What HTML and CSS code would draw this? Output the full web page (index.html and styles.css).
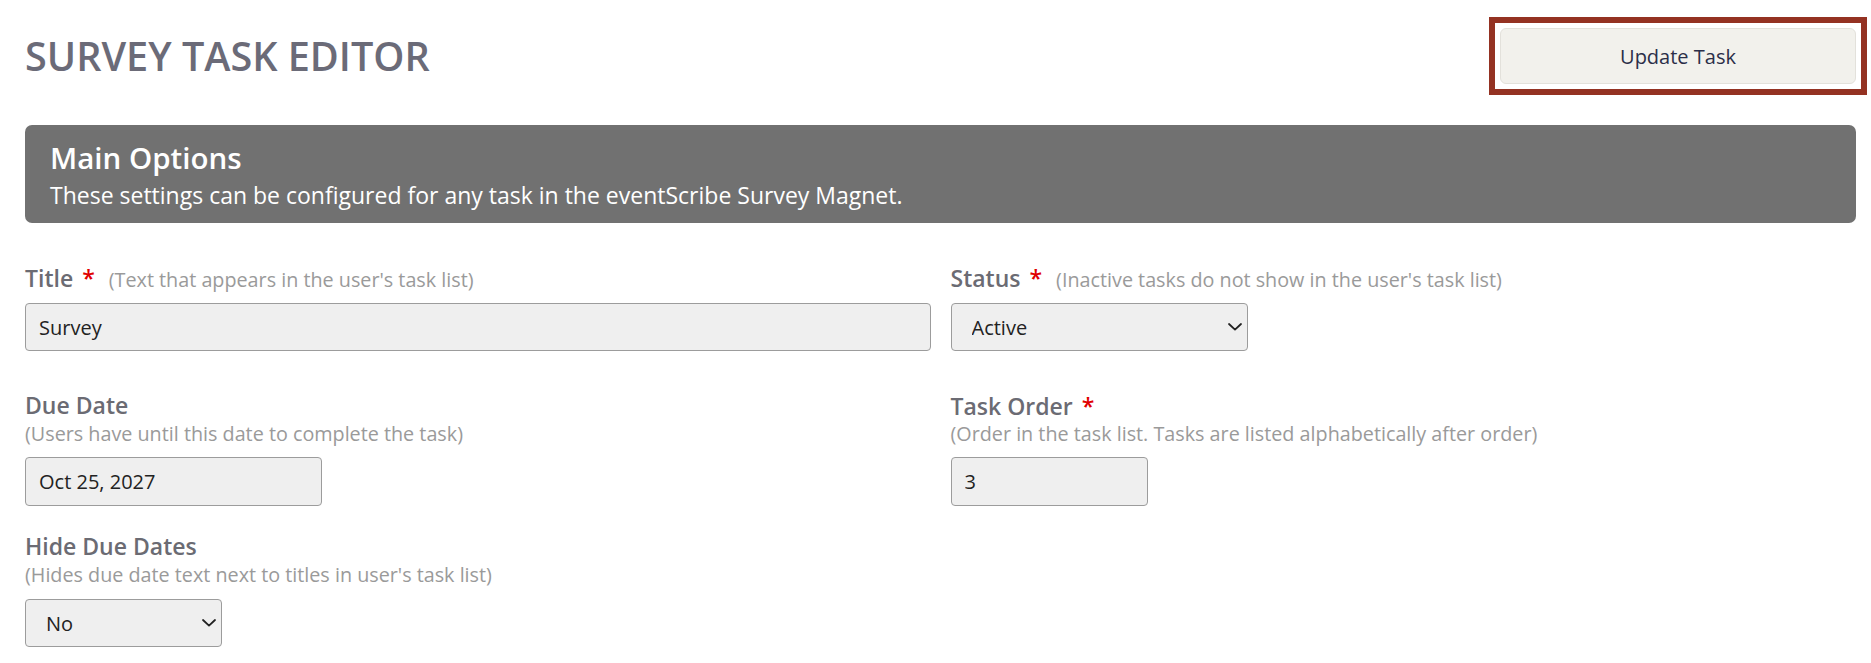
FILE: index.html
```html
<!DOCTYPE html>
<html lang="en">
<head>
<meta charset="utf-8">
<title>Survey Task Editor</title>
<link rel="stylesheet" href="styles.css">
</head>
<body>
<div class="page">
  <header class="page-header">
    <h1 class="page-title">SURVEY TASK EDITOR</h1>
    <div class="focus-ring">
      <button type="button" class="btn-update">Update Task</button>
    </div>
  </header>

  <section class="banner">
    <h2 class="banner-title">Main Options</h2>
    <p class="banner-text">These settings can be configured for any task in the eventScribe Survey Magnet.</p>
  </section>

  <div class="form-grid">
    <div class="field row-1">
      <div class="label-line">
        <label class="label" for="title">Title</label><span class="req">*</span><span class="hint inline">(Text that appears in the user's task list)</span>
      </div>
      <input id="title" class="input full" type="text" value="Survey">
    </div>
    <div class="field row-1">
      <div class="label-line">
        <label class="label" for="status">Status</label><span class="req">*</span><span class="hint inline">(Inactive tasks do not show in the user's task list)</span>
      </div>
      <div class="select-wrap w297">
        <select id="status" class="select"><option>Active</option><option>Inactive</option></select>
        <svg class="chevron" viewBox="0 0 14 8" aria-hidden="true"><path d="M1 1 L7 6.6 L13 1" fill="none" stroke="#222" stroke-width="1.8" stroke-linecap="round" stroke-linejoin="round"/></svg>
      </div>
    </div>

    <div class="field row-2">
      <div class="label-line"><label class="label" for="due">Due Date</label></div>
      <div class="hint">(Users have until this date to complete the task)</div>
      <input id="due" class="input w297" type="text" value="Oct 25, 2027">
    </div>
    <div class="field row-2">
      <div class="label-line"><label class="label" for="order">Task Order</label><span class="req">*</span></div>
      <div class="hint">(Order in the task list. Tasks are listed alphabetically after order)</div>
      <input id="order" class="input w197" type="text" value="3">
    </div>

    <div class="field row-3">
      <div class="label-line"><label class="label" for="hide">Hide Due Dates</label></div>
      <div class="hint">(Hides due date text next to titles in user's task list)</div>
      <div class="select-wrap w197">
        <select id="hide" class="select"><option>No</option><option>Yes</option></select>
        <svg class="chevron" viewBox="0 0 14 8" aria-hidden="true"><path d="M1 1 L7 6.6 L13 1" fill="none" stroke="#222" stroke-width="1.8" stroke-linecap="round" stroke-linejoin="round"/></svg>
      </div>
    </div>
  </div>
</div>
</body>
</html>
```

FILE: styles.css
```css
* { box-sizing: border-box; }

html, body {
  margin: 0;
  padding: 0;
  background: #ffffff;
}

body {
  font-family: "Open Sans", "Noto Sans", "Liberation Sans", sans-serif;
  color: #6b6b73;
}

.page {
  padding: 0 15px 0 25px;
}

.page-header {
  display: flex;
  justify-content: space-between;
  align-items: center;
  padding-top: 17px;
}

.page-title {
  margin: 0;
  font-size: 39.6px;
  font-weight: 600;
  line-height: 56px;
  color: #6b6b78;
  letter-spacing: 0;
}

.focus-ring {
  border: 6px solid #943222;
  padding: 5px;
  margin-right: -11px;
  display: flex;
}

.btn-update {
  width: 356px;
  height: 56px;
  background: #f2f1ec;
  border: 1px solid #e3e1db;
  border-radius: 6px;
  font-family: "Open Sans", "Noto Sans", sans-serif;
  font-size: 20px;
  color: #2b2e48;
  padding: 0;
  outline: none;
}

.banner {
  margin-top: 30px;
  height: 98px;
  background: #717171;
  border-radius: 7px;
  padding: 15px 25px 0;
  color: #ffffff;
}

.banner-title {
  margin: 0;
  font-size: 29.5px;
  font-weight: 600;
  line-height: 36px;
}

.banner-text {
  margin: 3px 0 0;
  font-size: 23px;
  line-height: 32px;
}

.form-grid {
  display: grid;
  grid-template-columns: 1fr 1fr;
  column-gap: 20px;
  padding-top: 39px;
}

.field {
  display: flex;
  flex-direction: column;
  align-items: flex-start;
}

.row-1 { margin-bottom: 39px; }
.row-2 { margin-bottom: 25px; }

.label-line {
  display: flex;
  align-items: baseline;
  height: 30px;
}

.label {
  font-size: 23px;
  font-weight: 600;
  line-height: 30px;
  color: #6b6b73;
}

.req {
  color: #e00000;
  font-size: 23px;
  font-weight: 600;
  margin-left: 9px;
}

.hint {
  font-size: 19.75px;
  line-height: 28px;
  color: #9a9a9a;
}

.hint.inline {
  margin-left: 14px;
}

.input,
.select {
  height: 48px;
  background: #efefef;
  border: 1px solid #9c9c9c;
  border-radius: 4px;
  font-family: "Open Sans", "Noto Sans", sans-serif;
  font-size: 20px;
  color: #222222;
  padding: 0 13px;
}

.row-1 .input,
.row-1 .select-wrap { margin-top: 11px; }
.row-2 .input { margin-top: 9px; height: 49px; }
.row-3 .select-wrap { margin-top: 10px; }

.input.full { width: 100%; }
.w297 { width: 297px; }
.w197 { width: 197px; }

.select-wrap {
  position: relative;
}

.select {
  width: 100%;
  appearance: none;
  -webkit-appearance: none;
  padding-left: 20px;
}

.chevron {
  position: absolute;
  right: 6px;
  top: 20px;
  width: 14px;
  height: 8px;
  pointer-events: none;
}
```
